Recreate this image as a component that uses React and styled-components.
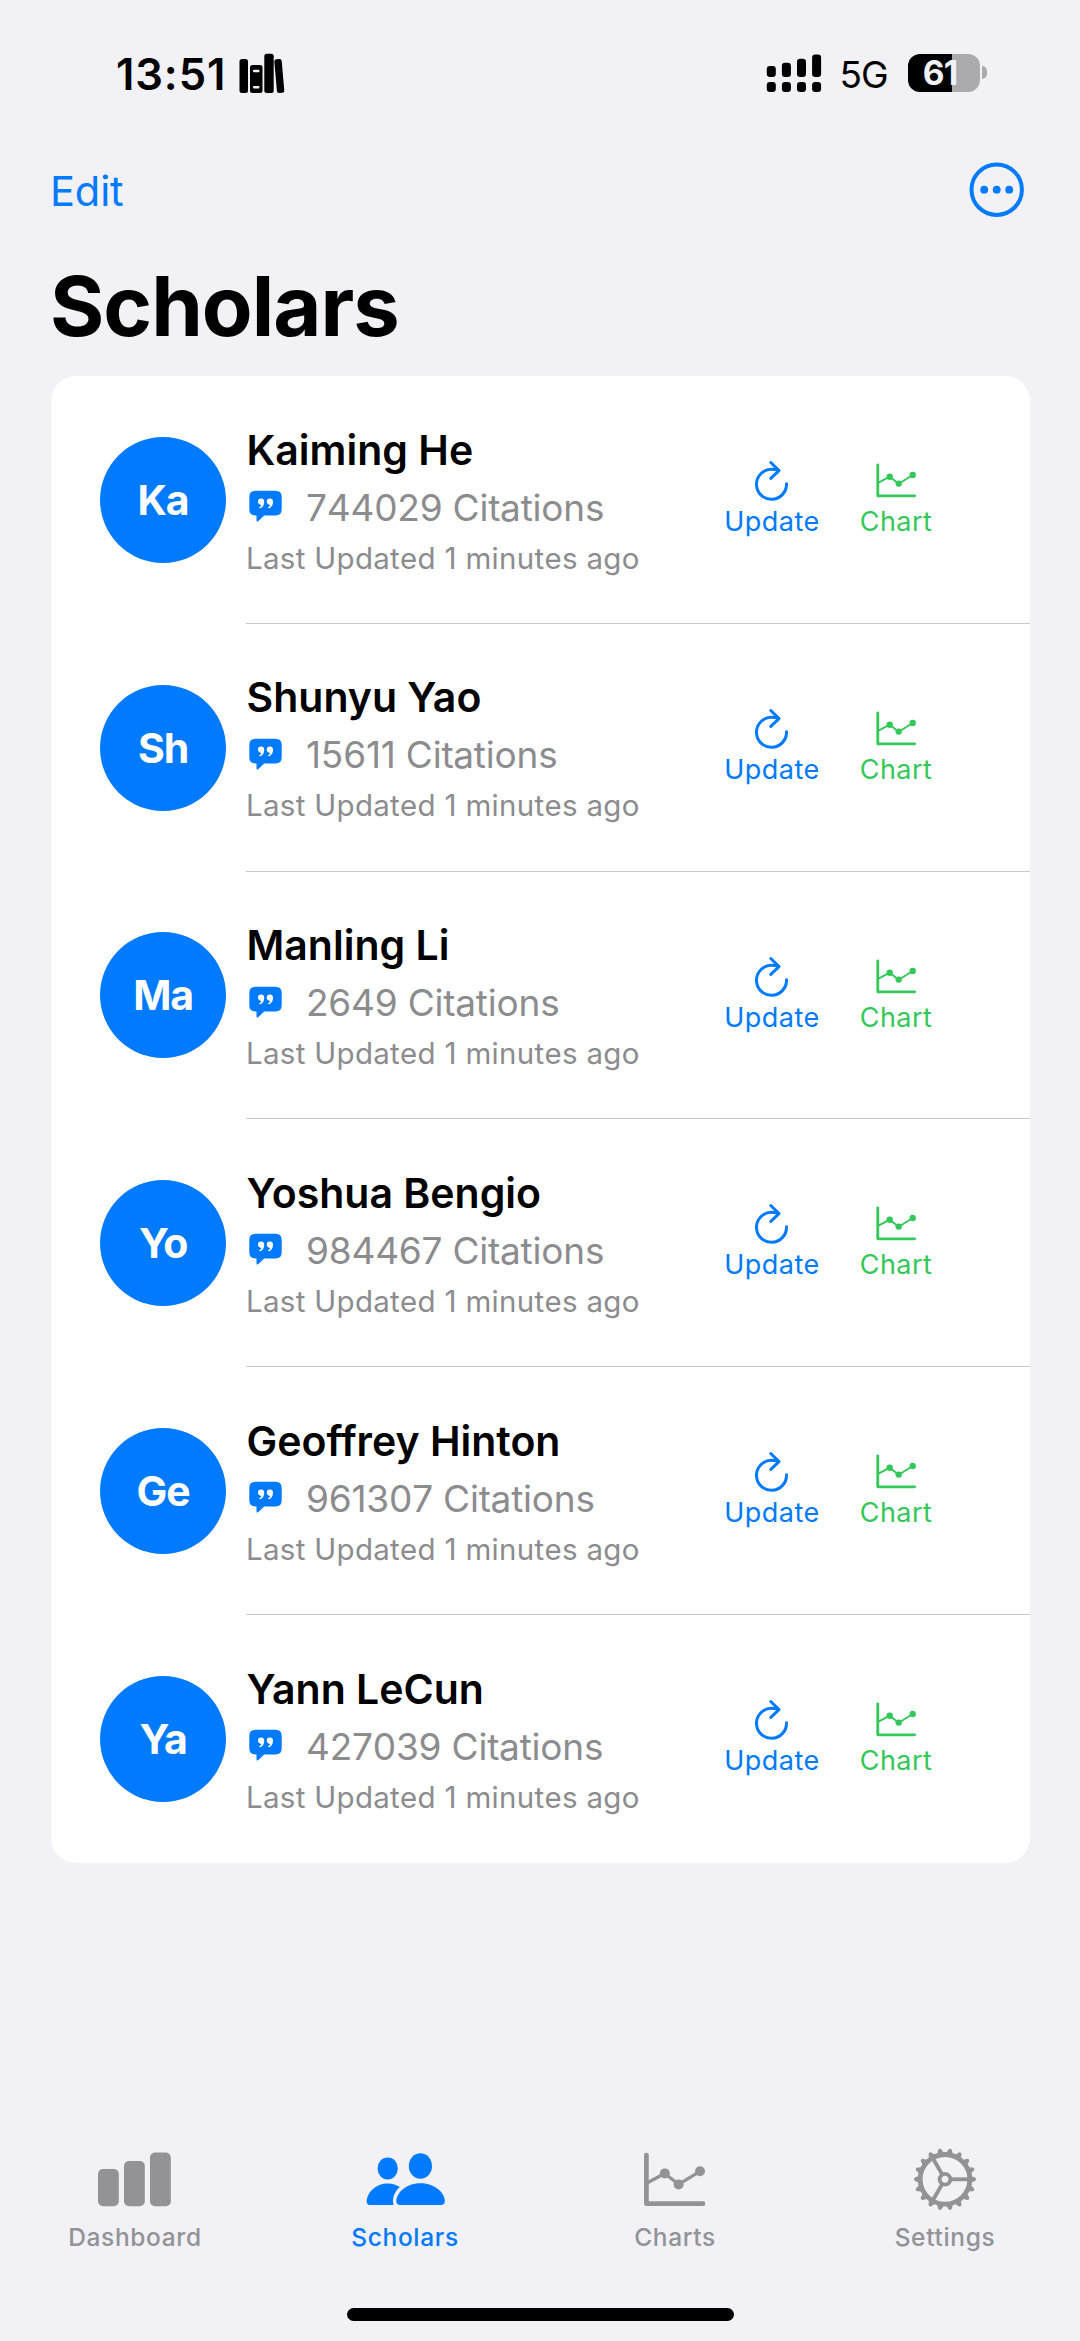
import React from "react";
import styled, { createGlobalStyle } from "styled-components";

const blue = "#007aff";
const green = "#34c759";
const gray = "#8c8c8f";
const tabGray = "#929297";
const canvas = "#f1f1f6";

const GlobalStyle = createGlobalStyle`
  * { box-sizing: border-box; }
  body {
    margin: 0;
    background: ${canvas};
    font-family: Inter, "Liberation Sans", sans-serif;
    color: #000;
  }
  svg { display: block; flex: none; }
`;

const Screen = styled.div`
  width: 1080px;
  height: 2341px;
  display: flex;
  flex-direction: column;
  background: ${canvas};
  overflow: hidden;
  white-space: nowrap;
`;

const StatusBar = styled.header`
  height: 148px;
  flex: none;
  padding: 48px 93.5px 0 116px;
  display: flex;
  justify-content: space-between;
  align-items: flex-start;
`;

const StatusGroup = styled.div`
  height: 52px;
  display: flex;
  align-items: center;
`;

const Clock = styled.span`
  width: 123px;
  font-size: 43.5px;
  line-height: 52px;
  font-weight: 600;
  font-kerning: none;
  letter-spacing: 0.9px;
`;

const Network = styled.span`
  width: 68px;
  margin-left: 17.5px;
  padding-top: 2px;
  font-size: 37px;
  line-height: 50px;
  font-weight: 400;
  letter-spacing: -1px;
`;

const Battery = styled.div`
  display: flex;
  align-items: center;
  gap: 2px;
  margin-top: -3px;
`;

const BatteryBody = styled.div`
  width: 72px;
  height: 38px;
  border-radius: 12px;
  background: linear-gradient(to right, #000 61%, #aaaaaf 61%);
  color: ${canvas};
  font-size: 33.5px;
  line-height: 39px;
  font-weight: 700;
  letter-spacing: -0.8px;
  text-align: center;
  padding-right: 7px;
`;

const BatteryCap = styled.div`
  width: 5px;
  height: 13px;
  border-radius: 0 6px 6px 0;
  background: #aaaaaf;
`;

const NavBar = styled.nav`
  height: 84px;
  flex: none;
  padding: 0 55px 0 50px;
  display: flex;
  align-items: center;
  justify-content: space-between;
`;

const TextButton = styled.button`
  border: 0;
  padding: 2px 0 0;
  background: none;
  color: ${blue};
  font: 400 41.5px/50px Inter, sans-serif;
  letter-spacing: -0.1px;
`;

const Title = styled.h1`
  margin: 24px 0 20px 50px;
  font-size: 83px;
  line-height: 100px;
  font-weight: 700;
  letter-spacing: -1px;
`;

const Card = styled.main`
  width: 979px;
  flex: none;
  margin-left: 51px;
  border-radius: 25px;
  background: #fff;
  overflow: hidden;
`;

const Row = styled.article`
  height: 247.8px;
  padding-left: 49px;
  display: flex;
  align-items: center;
`;

const Avatar = styled.div`
  width: 126px;
  height: 126px;
  flex: none;
  border-radius: 50%;
  background: ${blue};
  color: #fff;
  font-size: 41px;
  line-height: 126px;
  font-weight: 700;
  letter-spacing: -1.2px;
  text-align: center;
`;

const RowBody = styled.div`
  flex: 1;
  align-self: stretch;
  margin-left: 20px;
  padding-right: 94px;
  display: flex;
  justify-content: space-between;
  border-bottom: ${(p) => (p.$last ? "0" : "1px solid #c8c8ca")};
`;

const Info = styled.div`
  padding-top: 48.6px;
`;

const Name = styled.h2`
  margin: 0 0 0 0.5px;
  font-size: 41px;
  line-height: 50px;
  font-weight: 600;
  letter-spacing: 0;
`;

const Citations = styled.div`
  height: 65px;
  padding-left: 3px;
  display: flex;
  align-items: center;
  gap: 24px;
  color: ${gray};
  font-size: 37px;
  font-kerning: none;
  letter-spacing: -0.2px;
  line-height: 65px;
`;

const Updated = styled.div`
  color: ${gray};
  font-size: 29.5px;
  line-height: 36px;
  font-kerning: none;
  letter-spacing: 0.3px;
`;

const Actions = styled.div`
  padding-top: 83px;
  display: flex;
  gap: 34px;
`;

const Action = styled.button`
  width: ${(p) => p.$width}px;
  height: 78px;
  border: 0;
  padding: 0;
  background: none;
  display: flex;
  flex-direction: column;
  align-items: center;
  gap: 4px;
  color: ${(p) => p.$color};
  font: 400 27px/30px Inter, sans-serif;
  letter-spacing: 0.45px;
`;

const TabBar = styled.footer`
  margin-top: auto;
  height: 161px;
  flex: none;
  display: grid;
  grid-template-columns: repeat(4, 1fr);
`;

const Tab = styled.a`
  display: flex;
  flex-direction: column;
  align-items: center;
  gap: 11px;
  color: ${(p) => (p.$active ? blue : tabGray)};
  font-size: 24.5px;
  line-height: 30px;
  font-weight: 500;
  letter-spacing: 0.65px;
`;

const HomeArea = styled.div`
  height: 33px;
  flex: none;
  display: flex;
  justify-content: center;
`;

const HomeIndicator = styled.div`
  width: 387px;
  height: 12.5px;
  border-radius: 7px;
  background: #000;
`;

const BooksIcon = () => (
  <svg width="48" height="42" viewBox="0 0 48 42">
    <rect x="0.5" y="6" width="8.5" height="34" rx="2.5" />
    <rect x="11" y="12" width="12.5" height="28" rx="2.5" />
    <rect x="14" y="16.8" width="6.5" height="2.4" rx="1" fill={canvas} />
    <rect x="14" y="33" width="6.5" height="2.4" rx="1" fill={canvas} />
    <rect x="25.3" y="0.8" width="9.4" height="39.2" rx="2.5" />
    <rect x="36.6" y="6" width="7.4" height="34" rx="2.2" transform="rotate(-5 40.7 23)" />
  </svg>
);

const SignalIcon = () => (
  <svg width="56" height="40" viewBox="0 0 56 40">
    {[12, 8.7, 4.7, 0.5].map((top, i) => (
      <g key={top}>
        <rect x={0.8 + i * 15.1} y={top} width="9" height={23 - top} rx="3.2" />
        <rect x={0.8 + i * 15.1} y="28" width="9" height="10" rx="3.2" />
      </g>
    ))}
  </svg>
);

const MoreIcon = () => (
  <svg width="56" height="56" viewBox="0 0 56 56" fill={blue}>
    <circle cx="27.7" cy="27.7" r="25.2" fill="none" stroke={blue} strokeWidth="4" />
    <circle cx="15.2" cy="27.7" r="3.9" />
    <circle cx="27.7" cy="27.7" r="3.9" />
    <circle cx="40.2" cy="27.7" r="3.9" />
  </svg>
);

const QuoteIcon = () => (
  <svg width="33" height="34" viewBox="0 0 33 34">
    <path
      fill={blue}
      d="M6.5 .8H26.5Q32.7 .8 32.7 7V19.2Q32.7 25.4 26.5 25.4H15.2L9.4 31Q7.6 32.4 7.5 30.2V25.4H6.5Q.3 25.4 .3 19.2V7Q.3 .8 6.5 .8Z"
    />
    <g fill="#fff">
      <path d="M9 11.8A3.1 3.1 0 0 1 15.2 11.6C15.4 14.8 13.8 17.6 11.4 18.3Q9.9 18.6 10.2 17.3C11.4 16.7 12.1 15.9 12.4 14.9A3.1 3.1 0 0 1 9 11.8Z" />
      <path d="M17.8 11.8A3.1 3.1 0 0 1 24 11.6C24.2 14.8 22.6 17.6 20.2 18.3Q18.7 18.6 19 17.3C20.2 16.7 20.9 15.9 21.2 14.9A3.1 3.1 0 0 1 17.8 11.8Z" />
    </g>
  </svg>
);

const RefreshIcon = () => (
  <svg width="40" height="44" viewBox="0 0 40 44" fill="none" stroke="currentColor" strokeWidth="3" strokeLinecap="round" strokeLinejoin="round">
    <path d="M34.5 24.8A15 15 0 1 1 19.5 10.3Q23.4 10.3 26.6 11.4" />
    <path d="M18.8 3.5L27 11.6L18.8 19.4" />
  </svg>
);

const ChartIcon = () => (
  <svg width="42" height="44" viewBox="0 0 42 44" fill="currentColor" stroke="currentColor" strokeLinecap="round" strokeLinejoin="round">
    <path d="M2.8 5.8V36.8H39.6" fill="none" strokeWidth="2.8" />
    <path d="M3.5 23.7L14.7 17.7L23.7 24.7L37.7 16" fill="none" strokeWidth="1.9" />
    <g stroke="none">
      <circle cx="14.7" cy="17.7" r="3.2" />
      <circle cx="23.7" cy="24.6" r="3.2" />
      <circle cx="37.7" cy="16" r="3.2" />
    </g>
  </svg>
);

const DashboardIcon = () => (
  <svg width="90" height="64" viewBox="0 0 90 64" fill="currentColor">
    <rect x="8" y="22" width="20.8" height="37.2" rx="5" />
    <rect x="34" y="14" width="20.8" height="45.2" rx="5" />
    <rect x="60" y="5.5" width="20.8" height="53.7" rx="5" />
  </svg>
);

const PeopleIcon = () => (
  <svg width="90" height="64" viewBox="0 0 90 64" fill="currentColor">
    <ellipse cx="27.7" cy="21.4" rx="10.1" ry="11" />
    <path d="M10 58C7.8 58 6.7 56.7 6.7 54.5C6.7 47 14.5 36.4 27.7 36.4C32.7 36.4 36.9 37.9 39.8 40C34.6 44.6 31.7 51.5 33.5 58Z" />
    <ellipse cx="60.4" cy="19" rx="11.6" ry="12.8" />
    <path d="M40.5 58C37.6 58 36.3 56.7 36.3 54C36.3 47 45 36.3 60.5 36.3C76 36.3 84.8 47 84.8 54C84.8 56.7 83.4 58 80.7 58Z" />
  </svg>
);

const ChartsTabIcon = () => (
  <svg width="90" height="64" viewBox="0 0 90 64" fill="currentColor" stroke="currentColor" strokeLinecap="round" strokeLinejoin="round">
    <path d="M16.4 8V56.7H73" fill="none" strokeWidth="4.7" />
    <path d="M17 36L34.7 26.5L48.5 37.3L70 24.3" fill="none" strokeWidth="3.3" />
    <g stroke="none">
      <circle cx="34.8" cy="26.4" r="5" />
      <circle cx="48.6" cy="37.4" r="5" />
      <circle cx="70" cy="24.3" r="5" />
    </g>
  </svg>
);

const GearIcon = () => (
  <svg width="90" height="64" viewBox="-45 -32.3 90 64" fill="none" stroke="currentColor">
    <circle r="24.8" strokeWidth="4.8" />
    {Array.from({ length: 18 }, (_, i) => (
      <path key={i} d="M25.5 -3.6L30 -1.7Q32.2 0 30 1.7L25.5 3.6Z" fill="currentColor" stroke="none" transform={`rotate(${i * 20})`} />
    ))}
    {[0, 120, 240].map((angle) => (
      <path key={angle} d="M6 0H24" strokeWidth="3.9" transform={`rotate(${angle})`} />
    ))}
    <circle r="5.4" strokeWidth="3.8" />
  </svg>
);

const scholars = [
  { name: "Kaiming He", citations: 744029 },
  { name: "Shunyu Yao", citations: 15611 },
  { name: "Manling Li", citations: 2649 },
  { name: "Yoshua Bengio", citations: 984467 },
  { name: "Geoffrey Hinton", citations: 961307 },
  { name: "Yann LeCun", citations: 427039 },
];

const tabs = [
  { label: "Dashboard", Icon: DashboardIcon },
  { label: "Scholars", Icon: PeopleIcon, active: true },
  { label: "Charts", Icon: ChartsTabIcon },
  { label: "Settings", Icon: GearIcon },
];

const ScholarRow = ({ name, citations, last }) => (
  <Row>
    <Avatar>{name.slice(0, 2)}</Avatar>
    <RowBody $last={last}>
      <Info>
        <Name>{name}</Name>
        <Citations>
          <QuoteIcon />
          <span>{citations} Citations</span>
        </Citations>
        <Updated>Last Updated 1 minutes ago</Updated>
      </Info>
      <Actions>
        <Action $width={100} $color={blue}>
          <RefreshIcon />
          Update
        </Action>
        <Action $width={80} $color={green}>
          <ChartIcon />
          Chart
        </Action>
      </Actions>
    </RowBody>
  </Row>
);

export default function App() {
  return (
    <Screen>
      <GlobalStyle />
      <StatusBar>
        <StatusGroup>
          <Clock>13:51</Clock>
          <BooksIcon />
        </StatusGroup>
        <StatusGroup>
          <SignalIcon />
          <Network>5G</Network>
          <Battery>
            <BatteryBody>61</BatteryBody>
            <BatteryCap />
          </Battery>
        </StatusGroup>
      </StatusBar>
      <NavBar>
        <TextButton>Edit</TextButton>
        <MoreIcon />
      </NavBar>
      <Title>Scholars</Title>
      <Card>
        {scholars.map((s, i) => (
          <ScholarRow key={s.name} {...s} last={i === scholars.length - 1} />
        ))}
      </Card>
      <TabBar>
        {tabs.map(({ label, Icon, active }) => (
          <Tab key={label} $active={active}>
            <Icon />
            {label}
          </Tab>
        ))}
      </TabBar>
      <HomeArea>
        <HomeIndicator />
      </HomeArea>
    </Screen>
  );
}
